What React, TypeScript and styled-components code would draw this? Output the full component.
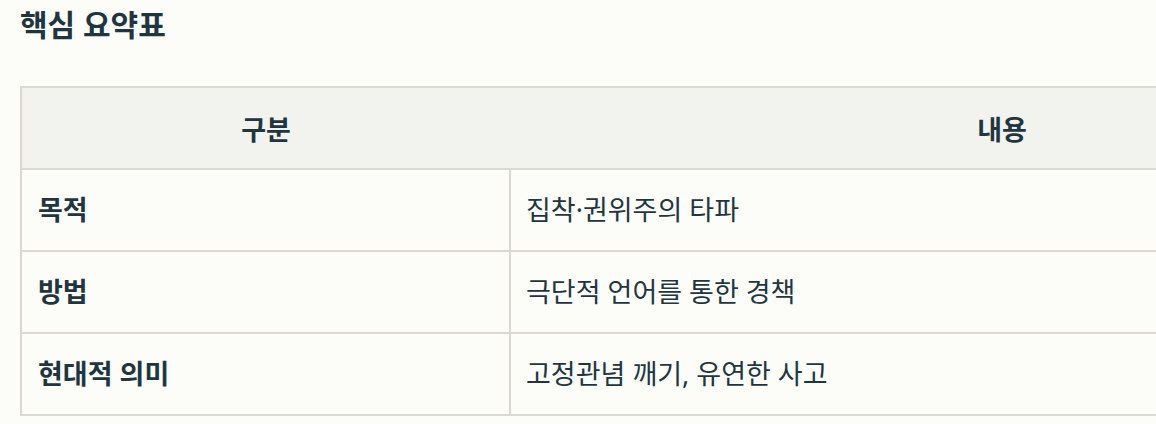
import React from 'react';
import styled, { createGlobalStyle } from 'styled-components';

const rows = [
  { label: '목적', value: '집착·권위주의 타파' },
  { label: '방법', value: '극단적 언어를 통한 경책' },
  { label: '현대적 의미', value: '고정관념 깨기, 유연한 사고' },
];

const GlobalStyle = createGlobalStyle`
  html, body {
    margin: 0;
    padding: 0;
    background: #fcfcf9;
    overflow: hidden;
  }
  body {
    font-family: "Noto Sans", "Noto Sans CJK KR", sans-serif;
    color: #1f3640;
  }
`;

const Page = styled.div`
  padding: 5px 0 0 20px;
  width: 1136px;
  overflow: hidden;
`;

const Title = styled.h2`
  margin: 0 0 41px;
  font-size: 30px;
  font-weight: 700;
  line-height: 40px;
  color: #1f3640;
`;

const Table = styled.table`
  width: 1476px;
  border-collapse: collapse;
  border: 2px solid #d9d9d1;
  table-layout: fixed;
`;

const HeadCell = styled.th<{ $width?: number }>`
  width: ${p => (p.$width ? `${p.$width}px` : 'auto')};
  height: 80px;
  padding: 0 16px;
  background: #f2f2ee;
  border-bottom: 2px solid #d9d9d1;
  font-size: 27px;
  font-weight: 700;
  text-align: center;
  color: #1f3640;
`;

const Cell = styled.td<{ $bold?: boolean }>`
  height: 80px;
  padding: 0 16px;
  padding-left: ${p => (p.$bold ? 16 : 15)}px;
  border: 2px solid #d9d9d1;
  font-size: 27px;
  font-weight: ${p => (p.$bold ? 700 : 400)};
  line-height: 34px;
  color: #1f3640;
`;

export default function App() {
  return (
    <>
      <GlobalStyle />
      <Page>
        <Title>핵심 요약표</Title>
        <Table>
          <thead>
            <tr>
              <HeadCell $width={456}>구분</HeadCell>
              <HeadCell>내용</HeadCell>
            </tr>
          </thead>
          <tbody>
            {rows.map(r => (
              <tr key={r.label}>
                <Cell $bold>{r.label}</Cell>
                <Cell>{r.value}</Cell>
              </tr>
            ))}
          </tbody>
        </Table>
      </Page>
    </>
  );
}
